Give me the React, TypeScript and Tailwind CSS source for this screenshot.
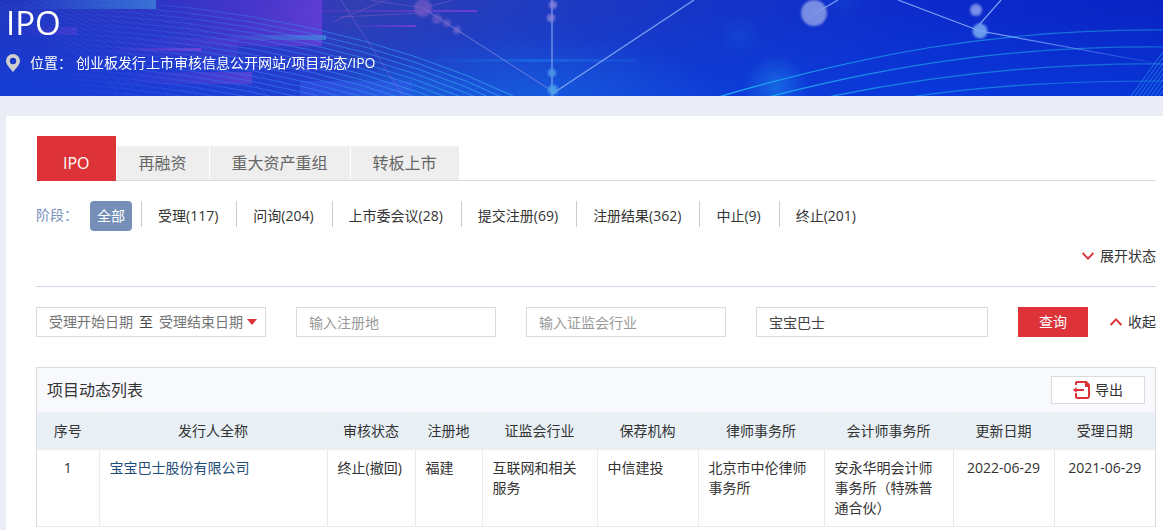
import React from "react";

const tabs = ["IPO", "再融资", "重大资产重组", "转板上市"];

const stages = [
  "受理(117)",
  "问询(204)",
  "上市委会议(28)",
  "提交注册(69)",
  "注册结果(362)",
  "中止(9)",
  "终止(201)",
];

const columns = [
  { title: "序号", width: "w-[62px]" },
  { title: "发行人全称", width: "" },
  { title: "审核状态", width: "w-[88px]" },
  { title: "注册地", width: "w-[67px]" },
  { title: "证监会行业", width: "w-[115px]" },
  { title: "保荐机构", width: "w-[101px]" },
  { title: "律师事务所", width: "w-[126px]" },
  { title: "会计师事务所", width: "w-[129px]" },
  { title: "更新日期", width: "w-[101px]" },
  { title: "受理日期", width: "w-[101px]" },
];

const rows = [
  [
    "1",
    "宝宝巴士股份有限公司",
    "终止(撤回)",
    "福建",
    "互联网和相关服务",
    "中信建投",
    "北京市中伦律师事务所",
    "安永华明会计师事务所（特殊普通合伙）",
    "2022-06-29",
    "2021-06-29",
  ],
];

const waves = Array.from({ length: 19 }, (_, i) => i);
const hatch = Array.from({ length: 10 }, (_, i) => i);

const nodes = [
  [814, 13, 13, "#8a9ce8", 0.85],
  [976, 10, 6, "#8a9ff0", 0.85],
  [980, 31, 7.5, "#74a5f0", 0.9],
  [553, 5, 4, "#8a85dc", 0.8],
  [551, 18, 4, "#8a85dc", 0.8],
  [552, 73, 4, "#4c97ea", 0.9],
  [553, 90, 5, "#4c9fec", 0.95],
  [423, 8, 9, "#7a5cc4", 0.65],
  [437, 19, 5, "#7562c8", 0.6],
  [447, 23, 4, "#7562c8", 0.6],
  [457, 30, 4, "#7f74d0", 0.6],
] as const;

function BannerArt() {
  return (
    <svg
      className="absolute inset-0 h-full w-full"
      viewBox="0 0 1163 96"
      preserveAspectRatio="xMinYMin slice"
      aria-hidden="true"
    >
      <defs>
        <linearGradient id="base">
          <stop offset="0" stopColor="#2036c0" />
          <stop offset="0.13" stopColor="#2c33c6" />
          <stop offset="0.27" stopColor="#3638be" />
          <stop offset="0.3" stopColor="#303eb2" />
          <stop offset="0.45" stopColor="#203cc0" />
          <stop offset="0.62" stopColor="#1434c8" />
          <stop offset="0.8" stopColor="#0c2bcc" />
          <stop offset="1" stopColor="#0a24c4" />
        </linearGradient>
        <linearGradient id="floor" x2="0" y2="1">
          <stop offset="0.1" stopColor="#0745e8" stopOpacity="0" />
          <stop offset="1" stopColor="#0745e8" stopOpacity="0.5" />
        </linearGradient>
        <radialGradient id="glow">
          <stop offset="0" stopColor="#1c80ea" stopOpacity="0.8" />
          <stop offset="1" stopColor="#1c80ea" stopOpacity="0" />
        </radialGradient>
        <linearGradient id="purple">
          <stop offset="0" stopColor="#4a34d0" stopOpacity="0" />
          <stop offset="0.5" stopColor="#4c34cc" stopOpacity="0.7" />
          <stop offset="1" stopColor="#603ed6" stopOpacity="0.95" />
        </linearGradient>
        <linearGradient id="pink">
          <stop offset="0" stopColor="#7435d4" stopOpacity="0" />
          <stop offset="1" stopColor="#8040d8" stopOpacity="0.8" />
        </linearGradient>
        <linearGradient id="cyan">
          <stop offset="0" stopColor="#3a90e0" stopOpacity="0" />
          <stop offset="1" stopColor="#3f93dc" stopOpacity="0.65" />
        </linearGradient>
        <linearGradient id="beam">
          <stop offset="0" stopColor="#1976ea" stopOpacity="0" />
          <stop offset="0.5" stopColor="#1976ea" stopOpacity="0.6" />
          <stop offset="1" stopColor="#1976ea" stopOpacity="0.2" />
        </linearGradient>
        <linearGradient id="arc" gradientUnits="userSpaceOnUse" x1="720" x2="1163" y1="0" y2="0">
          <stop offset="0" stopColor="#20b4f4" />
          <stop offset="0.4" stopColor="#1884e4" />
          <stop offset="1" stopColor="#1468d8" />
        </linearGradient>
        <linearGradient id="wave" gradientUnits="userSpaceOnUse" x1="60" x2="513" y1="0" y2="0">
          <stop offset="0" stopColor="#3070e0" stopOpacity="0.05" />
          <stop offset="0.35" stopColor="#3a78e8" stopOpacity="0.5" />
          <stop offset="1" stopColor="#30a4f0" stopOpacity="0.85" />
        </linearGradient>
        <linearGradient id="fade" gradientUnits="userSpaceOnUse" x1="980" x2="1160" y1="0" y2="0">
          <stop offset="0" stopColor="#80b0ff" />
          <stop offset="1" stopColor="#80b0ff" stopOpacity="0.1" />
        </linearGradient>
        <filter id="soft" x="-30%" y="-30%" width="160%" height="160%">
          <feGaussianBlur stdDeviation="0.8" />
        </filter>
      </defs>

      <rect width="1163" height="96" fill="url(#base)" />
      <rect width="1163" height="96" fill="url(#floor)" />
      <ellipse cx="530" cy="96" rx="190" ry="60" fill="url(#glow)" opacity="0.5" />
      <ellipse cx="400" cy="104" rx="100" ry="40" fill="url(#glow)" opacity="0.6" />
      <circle cx="776" cy="86" r="32" fill="url(#glow)" opacity="0.8" />
      <circle cx="740" cy="36" r="22" fill="url(#glow)" opacity="0.2" />
      <circle cx="845" cy="0" r="20" fill="url(#glow)" opacity="0.15" />

      <rect x="160" width="162" height="46" fill="url(#purple)" />
      <rect x="90" y="38" width="148" height="18" fill="url(#purple)" opacity="0.35" />
      <rect x="120" y="72" width="132" height="12" fill="url(#pink)" opacity="0.65" />
      <rect x="300" y="81" width="112" height="15" fill="#3a5cf0" opacity="0.45" />
      <rect x="20" width="136" height="9" fill="url(#cyan)" />
      <rect x="20" y="27" width="57" height="8" fill="url(#purple)" opacity="0.5" />
      <rect x="220" y="35" width="106" height="5" fill="url(#cyan)" />
      <rect x="110" y="48" width="91" height="3" fill="url(#pink)" />
      <rect x="260" y="10" width="217" height="2" fill="url(#pink)" />
      <rect x="340" y="25" width="76" height="2" fill="url(#pink)" />
      <rect x="430" y="59" width="208" height="3" fill="url(#beam)" />

      <g fill="none" stroke="url(#wave)" strokeWidth="1">
        {waves.map((i) => (
          <path key={i} d={`M60 ${-2 + i * 5} Q330 ${8 + i * 5.5} 513 ${96 + i * 6}`} />
        ))}
      </g>
      <g fill="none" stroke="#3b7ae4" strokeOpacity="0.18" strokeWidth="1">
        {waves.map((i) => (
          <path key={i} d={`M${-40 + i * 9} ${10 - i} Q${90 + i * 8} 40 ${120 + i * 10} 98`} />
        ))}
      </g>
      <g fill="none" stroke="url(#arc)" strokeWidth="1.2">
        <path d="M718 97 C860 56 990 29 1163 30" />
        <path d="M768 97 C900 63 1020 46 1163 47" />
        <path d="M828 97 C940 74 1050 63 1163 64" />
        <path d="M910 97 C1000 84 1080 81 1163 81" />
      </g>
      <g stroke="#2290ea" strokeOpacity="0.75" strokeWidth="1">
        {hatch.map((i) => (
          <path key={i} d={`M${1131 + i * 4} 96 L${1163 + i * 4} 52`} />
        ))}
      </g>

      <g fill="none" strokeWidth="1">
        <path d="M341 0 L403 96" stroke="#9a70e0" strokeOpacity="0.4" />
        <path d="M333 22 L386 0 M370 0 L423 8 L453 0 M340 17 L423 13" stroke="#8a60c8" strokeOpacity="0.45" />
        <path d="M423 8 L552 91" stroke="#8f8fe4" strokeOpacity="0.7" />
        <path d="M552 0 V96" stroke="#7c9cec" strokeWidth="1.6" strokeOpacity="0.8" />
        <path d="M552 94 L694 0" stroke="#7ea4f4" strokeWidth="1.2" />
        <path d="M898 0 L980 31 M1001 0 L979 25 M838 0 L814 14" stroke="#7f9ff4" strokeWidth="1.2" />
        <path d="M980 31 L1160 64" stroke="url(#fade)" strokeWidth="1.2" />
      </g>
      <g filter="url(#soft)">
        {nodes.map(([cx, cy, r, fill, opacity]) => (
          <circle key={`${cx}-${cy}`} cx={cx} cy={cy} r={r} fill={fill} opacity={opacity} />
        ))}
      </g>
    </svg>
  );
}

function Chevron({ up = false }: { up?: boolean }) {
  return (
    <svg width="12" height="8" viewBox="0 0 12 8" fill="none" stroke="#dd3237" strokeWidth="1.9" aria-hidden="true">
      <path d={up ? "M0.6 7 L6 1.4 L11.4 7" : "M0.6 1 L6 6.6 L11.4 1"} />
    </svg>
  );
}

function ExportIcon() {
  return (
    <svg width="18" height="18" viewBox="0 0 18 18" fill="none" stroke="#dd3237" strokeWidth="2" aria-hidden="true">
      <path d="M3 4 V2 Q3 1 4 1 H12.5 L16 4.5 V15 Q16 17 14 17 H4 Q3 17 3 16 V12" />
      <path d="M12 0 H13.5 L17 3.5 V6 H12 Z" fill="#dd3237" stroke="none" />
      <path d="M2 9 H11" />
      <path d="M0 9 L3.5 6.2 V11.8 Z" fill="#dd3237" stroke="none" />
    </svg>
  );
}

const field =
  "h-[30px] min-w-0 border border-[#dcdcdc] bg-white px-3 text-sm text-[#444] outline-none placeholder:text-[#999]";

export default function App() {
  return (
    <div className="min-h-screen bg-[#eaedf6] font-['Open_Sans','Noto_Sans_CJK_SC',sans-serif] text-sm text-[#333]">
      <header className="relative h-24 overflow-hidden bg-[#1434c8] text-white">
        <BannerArt />
        <div className="relative">
          <h1 className="pl-[6px] text-[33px] leading-[45px]">IPO</h1>
          <nav aria-label="位置" className="mt-2 flex items-center pl-[6px] leading-5">
            <svg width="14" height="18" viewBox="0 0 14 18" aria-hidden="true">
              <path
                fill="#cfcfcf"
                fillRule="evenodd"
                d="M7 0 A7 7 0 0 1 14 7 C14 10.5 9.8 14.5 7 18 C4.2 14.5 0 10.5 0 7 A7 7 0 0 1 7 0 Z M7 3.8 A3.2 3.2 0 1 0 7 10.2 A3.2 3.2 0 1 0 7 3.8 Z"
              />
            </svg>
            <span className="ml-[10px] w-[46px] whitespace-nowrap">位置：</span>
            <span>
              <a href="#home">创业板发行上市审核信息公开网站</a>/<a href="#projects">项目动态</a>/
              <a href="#ipo">IPO</a>
            </span>
          </nav>
        </div>
      </header>

      <main className="mt-5 ml-[6px] min-h-[calc(100vh-116px)] bg-white pt-5 pr-[7px] pl-[30px]">
        <div role="tablist" className="flex items-end gap-px border-b border-[#dcdcdc] pl-px text-base">
          {tabs.map((tab, i) =>
            i === 0 ? (
              <button
                key={tab}
                role="tab"
                aria-selected="true"
                className="-mb-px h-[45px] bg-[#dd3237] px-[26px] pt-2 text-white"
              >
                {tab}
              </button>
            ) : (
              <button key={tab} role="tab" aria-selected="false" className="h-[34px] bg-[#eee] px-[22px] text-[#666]">
                {tab}
              </button>
            ),
          )}
        </div>

        <div className="mt-5 flex items-start">
          <span className="w-[54px] whitespace-nowrap leading-[28px] text-[#758fb9]">阶段：</span>
          <button className="mr-[9px] h-[30px] rounded bg-[#758fb9] px-[7px] text-white">全部</button>
          {stages.map((stage) => (
            <button
              key={stage}
              className="h-[26px] border-l border-[#ccc] pt-1 pr-[18px] pl-4 leading-[22px] whitespace-nowrap"
            >
              {stage}
            </button>
          ))}
        </div>

        <div className="flex justify-end border-b border-[#cdd9e8] pt-[15px] pb-5">
          <button className="flex items-center gap-[6px] leading-5">
            <Chevron />
            展开状态
          </button>
        </div>

        <form className="mt-5 flex items-center" onSubmit={(e) => e.preventDefault()}>
          <div className="mr-[30px] flex h-[30px] w-[230px] items-center border border-[#dcdcdc] pl-3">
            <input
              aria-label="受理开始日期"
              placeholder="受理开始日期"
              className="w-[84px] outline-none placeholder:text-[#757575]"
            />
            <span className="mx-[6px] text-[#444]">至</span>
            <input
              aria-label="受理结束日期"
              placeholder="受理结束日期"
              className="w-[84px] outline-none placeholder:text-[#757575]"
            />
            <button type="button" aria-label="选择日期" className="ml-1">
              <svg width="10" height="6" viewBox="0 0 10 6" aria-hidden="true">
                <path d="M0 0 H10 L5 6 Z" fill="#dd3237" />
              </svg>
            </button>
          </div>
          <input aria-label="注册地" placeholder="输入注册地" className={`${field} mr-[30px] w-[200px]`} />
          <input aria-label="证监会行业" placeholder="输入证监会行业" className={`${field} mr-[30px] w-[200px]`} />
          <input aria-label="发行人全称" defaultValue="宝宝巴士" className={`${field} mr-[30px] flex-1`} />
          <button type="submit" className="h-[30px] w-[70px] bg-[#dd3237] text-white">
            查询
          </button>
          <button type="button" className="ml-[22px] flex items-center gap-[6px] whitespace-nowrap">
            <Chevron up />
            收起
          </button>
        </form>

        <section className="mt-[30px] border border-b-0 border-[#dcdcdc]">
          <div className="flex h-11 items-center justify-between bg-[#f8f9fd] px-[10px]">
            <h2 className="text-base">项目动态列表</h2>
            <button className="flex h-7 w-[94px] items-center justify-center gap-1 border border-[#dcdcdc] bg-white">
              <ExportIcon />
              导出
            </button>
          </div>
          <table className="w-full table-fixed border-collapse leading-5">
            <thead>
              <tr className="bg-[#e8f0f6]">
                {columns.map((c) => (
                  <th
                    key={c.title}
                    scope="col"
                    className={`h-[37px] border-r border-b border-[#eee] pt-[2px] font-normal last:border-r-0 ${c.width}`}
                  >
                    {c.title}
                  </th>
                ))}
              </tr>
            </thead>
            <tbody>
              {rows.map((row) => (
                <tr key={row[0]} className="border-b border-[#ebebeb] align-top">
                  {row.map((cell, i) => (
                    <td
                      key={columns[i].title}
                      className={`border-r border-[#ebebeb] py-2 last:border-r-0 ${
                        i === 0 || i > 7 ? "text-center whitespace-nowrap" : "pr-[10px] pl-[10px]"
                      } ${i === 2 ? "whitespace-nowrap" : ""}`}
                    >
                      {i === 1 ? (
                        <a href="#issuer" className="text-[#1f4e79]">
                          {cell}
                        </a>
                      ) : (
                        cell
                      )}
                    </td>
                  ))}
                </tr>
              ))}
            </tbody>
          </table>
        </section>
      </main>
    </div>
  );
}
